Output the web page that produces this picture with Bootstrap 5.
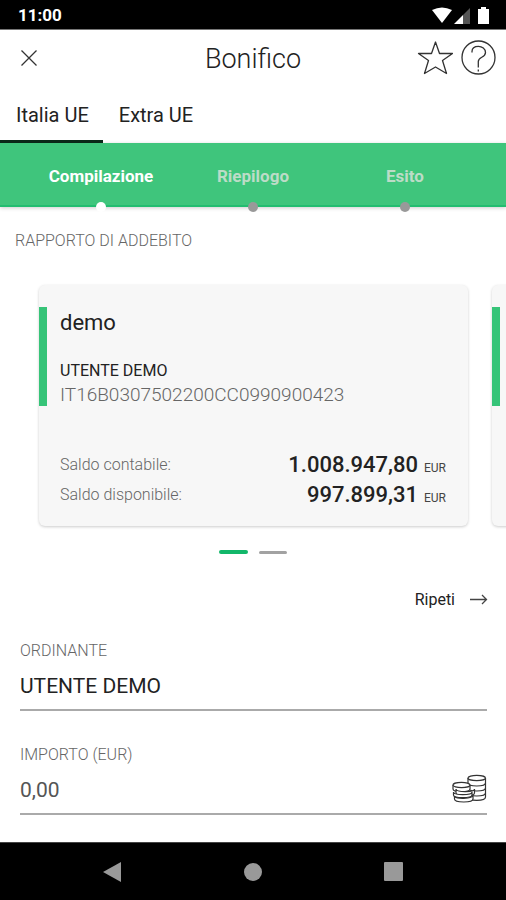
<!DOCTYPE html>
<html lang="it">
<head>
<meta charset="utf-8">
<meta name="viewport" content="width=device-width, initial-scale=1">
<title>Bonifico</title>
<link href="https://cdn.jsdelivr.net/npm/bootstrap@5.3.0/dist/css/bootstrap.min.css" rel="stylesheet">
<style>
  body { font-family: Roboto, "Liberation Sans", sans-serif; color: #222; background: #fff; }
  svg { display: block; }
  button.plain { background: none; border: 0; padding: 0; color: inherit; }
  .status-bar { height: 30px; background: #000; color: #fff; padding: 2px 16px 0 18px; font-size: 17px; font-weight: 700; border-bottom: 1px solid #777; }
  .app-header { display: grid; grid-template-columns: 1fr auto 1fr; height: 56px; padding: 0 10px; }
  .app-header .close-button { padding-left: 10px; }
  .app-title { font-size: 27px; font-weight: 300; line-height: 32px; padding-top: 2px; color: #222; }
  .tab-link { font-size: 20px; line-height: 24px; color: #222; padding: 17px 14px 13px 16px; border-bottom: 3px solid transparent; text-decoration: none; }
  .tab-link.active { border-color: #0b2a1a; }
  .stepper { background: #3fc57c; height: 64px; padding: 0 25px; box-shadow: 0 1px 4px rgba(0,0,0,.2); border-bottom: 2px solid #22bd70; }
  .step { position: relative; flex: 1 1 0; text-align: center; font-size: 17px; line-height: 24px; font-weight: 700; padding-top: 21px; color: #bcdcc7; }
  .step::after { content: ""; position: absolute; left: 50%; bottom: -7px; width: 10px; height: 10px; margin-left: -5px; border-radius: 50%; background: #999; }
  .step.current { color: #fff; }
  .step.current::after { background: #fff; }
  .section-title { font-size: 16px; line-height: 20px; font-weight: 300; color: #666; margin: 24px 15px 0; }
  .accounts { overflow: hidden; gap: 24px; padding: 34px 0 6px 39px; }
  .account { flex: 0 0 calc(100% - 38px); height: 241px; border-radius: 6px; background: #f7f7f7; box-shadow: 0 1px 3px rgba(0,0,0,.2); padding: 22px 22px 20px 0; }
  .account-top { border-left: 8px solid #36c478; height: 99px; padding-left: 13px; }
  .account-name { font-size: 22px; font-weight: 400; line-height: 32px; margin-bottom: 20px; }
  .holder { font-size: 16px; line-height: 24px; }
  .iban { font-size: 19px; line-height: 24px; font-weight: 300; color: #666; }
  .balances { padding-left: 21px; margin-top: 44px; }
  .balance-row { height: 30px; line-height: 30px; font-size: 16px; font-weight: 300; color: #666; }
  .amount { font-size: 22px; font-weight: 500; color: #222; }
  .currency { font-size: 12px; font-weight: 400; color: #444; margin-left: 6px; }
  .pager { gap: 11px; margin-top: 18px; }
  .pager button { width: 29px; height: 4px; border-radius: 2px; background: #12b76a; }
  .pager button + button { height: 3px; width: 28px; background: #a2a2a2; }
  .repeat { font-size: 16px; line-height: 24px; gap: 15px; margin: 34px 18px 0 0; }
  .fields { padding: 29px 19px 20px 20px; }
  .field { border-bottom: 2px solid #aaa; }
  .field + .field { margin-top: 34px; }
  .field label { display: block; font-size: 16px; line-height: 20px; font-weight: 300; color: #666; }
  .field input { border: 0; padding: 2px 0 0; outline: 0; min-width: 0; background: none; height: 48px; font-size: 21px; color: #222; }
  .field input::placeholder { color: #555; opacity: 1; }
  .android-nav { height: 58px; background: #000; padding: 0 42px; border-top: 1px solid #444; }
</style>
<script src="https://cdn.jsdelivr.net/npm/bootstrap@5.3.0/dist/js/bootstrap.bundle.min.js"></script>
</head>
<body>
<div class="min-vh-100 d-flex flex-column">
  <div class="status-bar d-flex align-items-center justify-content-between">
    <span>11:00</span>
    <svg width="58" height="18" viewBox="0 0 58 18" fill="#fff" aria-hidden="true"><path d="M0 3Q10-2 20 3L10 16Z"/><path d="M22 17L31 8V17Z"/><path d="M31 8L38 1V17H31Z" fill="#555"/><path d="M49 0H54V2H57V17H46V2H49Z"/></svg>
  </div>
  <header class="app-header align-items-center">
    <button class="plain close-button text-start" type="button" aria-label="Chiudi"><svg width="18" height="18" viewBox="0 0 18 18" fill="none" stroke="#333" stroke-width="1.300"><path d="M1.500 1.500L16.500 16.500M16.500 1.500L1.500 16.500"/></svg></button>
    <h1 class="app-title m-0">Bonifico</h1>
    <div class="d-flex justify-content-end gap-2">
      <button class="plain" type="button" aria-label="Preferiti"><svg width="36" height="36" viewBox="0 0 36 36" fill="none" stroke="#333" stroke-width="1.300" stroke-linejoin="round"><path d="M18.500 2L22.500 13.500H35.500L25.500 20.500L29.500 33.500L18.500 27L7.500 33.500L11.500 20.500L1.500 13.500H14.500Z"/></svg></button>
      <button class="plain" type="button" aria-label="Aiuto"><svg width="35" height="36" viewBox="0 0 35 36" fill="none" stroke="#333" stroke-width="1.300"><circle cx="17.500" cy="17.500" r="16.500"/><path d="M11 12.500V11.500C11 8 14 6.300 17.500 6.300S24.500 9 24.500 12.500C24.500 18 17.300 16.500 17.300 21.500V27.500M17.300 29.500V31.500"/></svg></button>
    </div>
  </header>
  <nav class="d-flex" aria-label="Tipo di bonifico">
    <a class="tab-link active" href="#italia" aria-current="page">Italia UE</a>
    <a class="tab-link" href="#extra">Extra UE</a>
  </nav>
  <div class="stepper d-flex">
    <div class="step current" aria-current="step">Compilazione</div>
    <div class="step">Riepilogo</div>
    <div class="step">Esito</div>
  </div>
  <main>
    <h2 class="section-title">RAPPORTO DI ADDEBITO</h2>
    <div class="accounts d-flex">
      <article class="account">
        <div class="account-top">
          <h3 class="account-name">demo</h3>
          <div class="holder">UTENTE DEMO</div>
          <div class="iban">IT16B0307502200CC0990900423</div>
        </div>
        <div class="balances">
          <div class="balance-row d-flex justify-content-between"><span>Saldo contabile:</span><span><span class="amount">1.008.947,80</span><span class="currency">EUR</span></span></div>
          <div class="balance-row d-flex justify-content-between"><span>Saldo disponibile:</span><span><span class="amount">997.899,31</span><span class="currency">EUR</span></span></div>
        </div>
      </article>
      <article class="account"><div class="account-top"></div></article>
    </div>
    <div class="pager d-flex justify-content-center align-items-center">
      <button class="plain" type="button" aria-label="Conto 1"></button>
      <button class="plain" type="button" aria-label="Conto 2"></button>
    </div>
    <div class="d-flex justify-content-end">
      <button class="plain repeat d-flex align-items-center" type="button">Ripeti
        <svg width="18" height="12" viewBox="0 0 18 12" fill="none" stroke="#444" stroke-width="1.300"><path d="M0 5.500H16.500M12 1L16.500 5.500L12 10"/></svg>
      </button>
    </div>
    <form class="fields">
      <div class="field">
        <label for="ordinante">ORDINANTE</label>
        <input class="w-100 d-block" id="ordinante" type="text" value="UTENTE DEMO">
      </div>
      <div class="field">
        <label for="importo">IMPORTO (EUR)</label>
        <div class="d-flex align-items-center">
          <input class="flex-grow-1" id="importo" type="text" inputmode="decimal" placeholder="0,00">
          <button class="plain" type="button" aria-label="Scegli importo"><svg width="36" height="30" viewBox="0 0 36 30" fill="#fff" stroke="#333" stroke-width="1.200"><path d="M17 4V23C17 27.500 34.500 27.500 34.500 23V4"/><path d="M17 9C17 13 34.500 13 34.500 9M17 14C17 18 34.500 18 34.500 14M17 19C17 23 34.500 23 34.500 19" fill="none"/><ellipse cx="25.700" cy="4" rx="8.700" ry="2.600"/><path d="M2 11V15C2 18.500 19 18.500 19 15V11"/><ellipse cx="10.500" cy="11" rx="8.500" ry="2.600"/><path d="M5 15V19C5 22.500 23.500 22.500 23.500 19V15C23.500 18.500 5 18.500 5 15Z"/><path d="M2.500 18V21C2.500 24.500 21 24.500 21 21V18C21 21.500 2.500 21.500 2.500 18Z"/><path d="M3.500 22V25C3.500 29 22 29 22 25V21C22 25 3.500 25.500 3.500 22Z"/></svg></button>
        </div>
      </div>
    </form>
  </main>
  <nav class="android-nav mt-auto d-flex align-items-center" aria-label="Sistema">
    <button class="plain d-flex flex-fill justify-content-center w-100" type="button" aria-label="Indietro"><svg width="19" height="20" viewBox="0 0 19 20" fill="#999"><path d="M0 10L18 0V20Z"/></svg></button>
    <button class="plain d-flex flex-fill justify-content-center w-100" type="button" aria-label="Home"><svg width="18" height="18" viewBox="0 0 18 18" fill="#999"><circle cx="9" cy="9" r="9"/></svg></button>
    <button class="plain d-flex flex-fill justify-content-center w-100" type="button" aria-label="Recenti"><svg width="19" height="19" viewBox="0 0 19 19" fill="#999"><rect width="19" height="19" rx="1"/></svg></button>
  </nav>
</div>
</body>
</html>
